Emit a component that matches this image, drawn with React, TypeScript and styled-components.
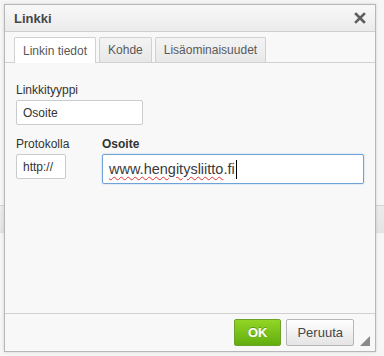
import * as React from 'react';
import styled, { createGlobalStyle } from 'styled-components';

const GlobalStyle = createGlobalStyle`
  html, body {
    margin: 0;
    padding: 0;
    background: #f6f6f6;
    font-family: "Liberation Sans", Arial, sans-serif;
  }
`;

const Page = styled.div`
  position: relative;
  width: 384px;
  height: 356px;
  overflow: hidden;
  display: flex;
  flex-direction: column;
  background: #f6f6f6;
`;

const PageBand = styled.div`
  margin-top: 205px;
  height: 26px;
  border-top: 1px solid #d4d4d4;
  border-bottom: 1px solid #e2e2e2;
  background: linear-gradient(#ececec, #e4e4e4);
`;

const Dialog = styled.div`
  position: absolute;
  left: 4px;
  top: 4px;
  width: 372px;
  height: 348px;
  box-sizing: border-box;
  border: 1px solid #b7b7b7;
  box-shadow: 0 0 3px rgba(0, 0, 0, 0.15);
  background: #f8f8f8;
  display: flex;
  flex-direction: column;
`;

const TitleBar = styled.div`
  height: 26px;
  border-bottom: 1px solid #cfcfcf;
  background: linear-gradient(#f8f8f8, #ebebeb);
  display: flex;
  align-items: center;
  justify-content: space-between;
  padding: 0 9px;
`;

const Title = styled.span`
  font-size: 13px;
  font-weight: bold;
  color: #474747;
`;

const TabRow = styled.div`
  display: flex;
  gap: 3px;
  padding: 5px 9px 0;
  border-bottom: 1px solid #d1d1d1;
`;

const Tab = styled.div<{ $active?: boolean }>`
  padding: 0 8px;
  display: flex;
  align-items: center;
  font-size: 12px;
  color: #595959;
  border: 1px solid #d1d1d1;
  border-bottom: none;
  border-radius: 2px 2px 0 0;
  margin-bottom: ${p => (p.$active ? '-1px' : '0')};
  height: ${p => (p.$active ? '25px' : '24px')};
  background: ${p => (p.$active ? '#fff' : 'linear-gradient(#f4f4f4, #e8e8e8)')};
`;

const Body = styled.div`
  flex: 1;
  padding: 20px 11px 0;
  display: flex;
  flex-direction: column;
`;

const Field = styled.div<{ $w?: number }>`
  display: flex;
  flex-direction: column;
  gap: 3px;
  width: ${p => (p.$w ? `${p.$w}px` : 'auto')};
`;

const Label = styled.label<{ $bold?: boolean }>`
  font-size: 12px;
  line-height: 14px;
  color: #333;
  white-space: nowrap;
  font-weight: ${p => (p.$bold ? 'bold' : 'normal')};
`;

const Box = styled.div<{ $w: number; $h: number }>`
  width: ${p => p.$w}px;
  height: ${p => p.$h}px;
  box-sizing: border-box;
  background: #fff;
  border: 1px solid #c9cccf;
  border-radius: 2px;
  display: flex;
  align-items: center;
  padding-left: 6px;
  font-size: 12px;
  color: #333;
`;

const Row = styled.div`
  display: flex;
  margin-top: 12px;
`;

const UrlInput = styled.div`
  width: 262px;
  height: 30px;
  box-sizing: border-box;
  background: #fff;
  border: 1px solid #6fa2d6;
  border-radius: 2px;
  box-shadow: 0 0 2px rgba(80, 140, 210, 0.4);
  display: flex;
  align-items: center;
  padding-left: 6px;
  font-size: 14.5px;
  color: #3a3a3a;
  white-space: pre;
`;

const Misspelled = styled.span`
  text-decoration: underline wavy #e03030;
  text-decoration-thickness: 1px;
  text-underline-offset: 2px;
`;

const Caret = styled.span`
  display: inline-block;
  width: 1px;
  height: 19px;
  margin-left: 1px;
  background: #000;
`;

const Footer = styled.div`
  height: 37px;
  border-top: 1px solid #d1d1d1;
  display: flex;
  align-items: center;
  justify-content: flex-end;
  gap: 5px;
  padding-right: 21px;
  position: relative;
`;

const Button = styled.div<{ $primary?: boolean }>`
  height: 27px;
  box-sizing: border-box;
  padding: 0 ${p => (p.$primary ? '13px' : '10px')};
  display: flex;
  align-items: center;
  border-radius: 2px;
  font-size: 13px;
  font-weight: ${p => (p.$primary ? 'bold' : 'normal')};
  color: ${p => (p.$primary ? '#fff' : '#474747')};
  border: 1px solid ${p => (p.$primary ? '#6ba227' : '#b6b6b6')};
  background: ${p =>
    p.$primary ? 'linear-gradient(#92d526, #62ad0f)' : 'linear-gradient(#ffffff, #e4e4e4)'};
  text-shadow: ${p => (p.$primary ? '0 -1px 0 rgba(60,110,10,0.5)' : 'none')};
`;

const Grip = styled.div`
  position: absolute;
  right: 5px;
  bottom: 5px;
  width: 0;
  height: 0;
  border-left: 10px solid transparent;
  border-bottom: 10px solid #8a8a8a;
`;

const CloseIcon = () => (
  <svg width="12" height="12" viewBox="0 0 12 12">
    <path d="M2 2 L10 10 M10 2 L2 10" stroke="#5f5f5f" strokeWidth="2.6" strokeLinecap="square" />
  </svg>
);

export default function App() {
  return (
    <Page>
      <GlobalStyle />
      <PageBand />
      <Dialog>
        <TitleBar>
          <Title>Linkki</Title>
          <CloseIcon />
        </TitleBar>
        <TabRow>
          <Tab $active>Linkin tiedot</Tab>
          <Tab>Kohde</Tab>
          <Tab>Lisäominaisuudet</Tab>
        </TabRow>
        <Body>
          <Field>
            <Label>Linkkityyppi</Label>
            <Box $w={127} $h={25}>Osoite</Box>
          </Field>
          <Row>
            <Field $w={88}>
              <Label>Protokolla</Label>
              <Box $w={50} $h={25}>http://</Box>
            </Field>
            <Field>
              <Label $bold>Osoite</Label>
              <UrlInput>
                <Misspelled>www.hengitysliitto</Misspelled>.fi
                <Caret />
              </UrlInput>
            </Field>
          </Row>
        </Body>
        <Footer>
          <Button $primary>OK</Button>
          <Button>Peruuta</Button>
          <Grip />
        </Footer>
      </Dialog>
    </Page>
  );
}
